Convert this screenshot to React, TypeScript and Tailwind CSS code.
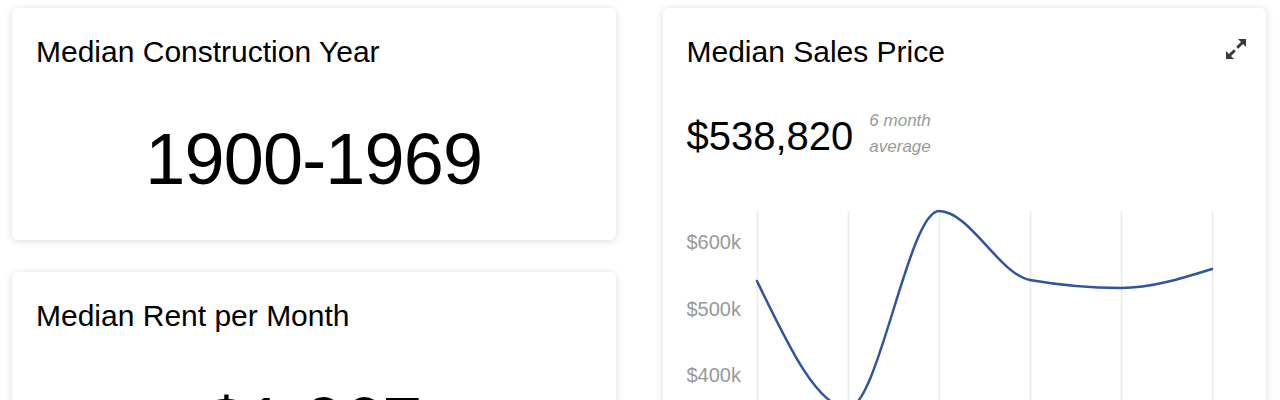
import { ReactNode } from 'react'

const GRID_X = [70, 161, 252, 343, 434, 525]

const Y_LABELS = [
  { label: '$600k', y: 49 },
  { label: '$500k', y: 116 },
  { label: '$400k', y: 182 },
]

// monotone curve through the six monthly values
const SALES_PATH =
  'M70 81 C100.33 144 130.67 208 161 208 C191.33 208 221.67 11 252 11 C282.33 11 312.67 74.67 343 80 C373.33 85.33 403.67 88 434 88 C464.33 88 494.67 78.5 525 69'

function Card({ className = '', children }: { className?: string; children: ReactNode }) {
  return (
    <div className={`rounded-md bg-white shadow-[0_1px_8px_rgba(0,0,0,0.14)] ${className}`}>
      {children}
    </div>
  )
}

function StatCard({ title, value }: { title: string; value: string }) {
  return (
    <Card className="h-[232px] px-6 pt-[26px]">
      <h2 className="text-[30px] leading-[36px]">{title}</h2>
      <div className="mt-[53px] text-center text-[72px] leading-none tracking-[-0.8px]">{value}</div>
    </Card>
  )
}

function ExpandIcon() {
  return (
    <svg width="22" height="22" viewBox="0 0 22 22" className="text-[#3a3a3a]">
      <polygon points="13,1 21,1 21,9" fill="currentColor" />
      <line x1="18" y1="4" x2="12.2" y2="9.8" stroke="currentColor" strokeWidth="3" />
      <polygon points="1,13 1,21 9,21" fill="currentColor" />
      <line x1="4" y1="18" x2="9.8" y2="12.2" stroke="currentColor" strokeWidth="3" />
    </svg>
  )
}

export default function App() {
  return (
    <div className="min-h-screen bg-white font-['Liberation_Sans',Arial,sans-serif] text-black">
      <div className="grid grid-cols-2 gap-[47px] pl-3 pr-[14px] pt-2">
        <div className="flex flex-col gap-8">
          <StatCard title="Median Construction Year" value="1900-1969" />
          <StatCard title="Median Rent per Month" value="$1,067" />
        </div>

        <Card className="h-[496px] px-6 pt-[26px]">
          <div className="flex items-start justify-between">
            <h2 className="text-[30px] leading-[36px]">Median Sales Price</h2>
            <button className="mt-[4px] -mr-[5px]">
              <ExpandIcon />
            </button>
          </div>

          <div className="mt-[38px] flex items-start">
            <div className="mt-2 text-[40px] leading-none">$538,820</div>
            <div className="ml-4 text-[17px] italic leading-[26px] text-[#999]">
              <div>6 month</div>
              <div>average</div>
            </div>
          </div>

          <svg width="556" height="290" viewBox="0 0 556 290" className="mt-[40px] block">
            {GRID_X.map((x) => (
              <line key={x} x1={x + 0.5} y1="11" x2={x + 0.5} y2="290" stroke="#ebebeb" strokeWidth="1.5" />
            ))}
            {Y_LABELS.map((l) => (
              <text
                key={l.label}
                x="54"
                y={l.y}
                textAnchor="end"
                fontSize="20"
                fill="#999"
                fontFamily="'Liberation Sans', Arial, sans-serif"
              >
                {l.label}
              </text>
            ))}
            <path d={SALES_PATH} fill="none" stroke="#30559c" strokeWidth="2.5" strokeLinecap="round" />
          </svg>
        </Card>
      </div>
    </div>
  )
}
